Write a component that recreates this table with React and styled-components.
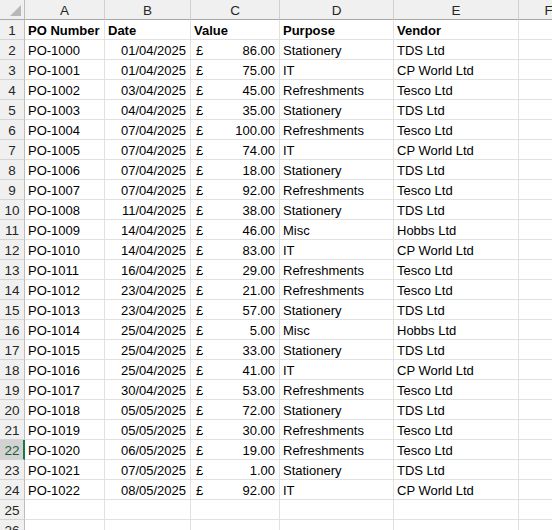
import React from "react";
import styled, { createGlobalStyle } from "styled-components";

const Global = createGlobalStyle`
  html, body { margin: 0; padding: 0; background: #fff; overflow: hidden; }
  body { font-family: "Liberation Sans", Arial, sans-serif; }
`;

const COLS = ["A", "B", "C", "D", "E", "F"];

const Sheet = styled.div`
  display: grid;
  grid-template-columns: 25px 80px 86px 89px 114px 125px 60px;
  grid-auto-rows: 20px;
  width: 552px;
  height: 530px;
  overflow: hidden;
  font-size: 13px;
  color: #000;
`;

const Corner = styled.div`
  position: relative;
  background: #f0f0f0;
  border-right: 1px solid #bcbcbc;
  border-bottom: 1px solid #a8a8a8;
  box-sizing: border-box;
  &::after {
    content: "";
    position: absolute;
    right: 3px;
    bottom: 3px;
    width: 0;
    height: 0;
    border-left: 11px solid transparent;
    border-bottom: 11px solid #b8b8b8;
  }
`;

const ColHead = styled.div`
  background: #f0f0f0;
  border-right: 1px solid #d0d0d0;
  border-bottom: 1px solid #a8a8a8;
  box-sizing: border-box;
  display: flex;
  align-items: center;
  justify-content: center;
  color: #262626;
  font-size: 13.5px;
  padding-top: 1px;
`;

const RowHead = styled.div`
  background: ${(p) => (p.$selected ? "#d2d2d2" : "#f0f0f0")};
  border-right: ${(p) => (p.$selected ? "2px solid #107c41" : "1px solid #bcbcbc")};
  border-bottom: 1px solid #d4d4d4;
  box-sizing: border-box;
  display: flex;
  align-items: center;
  justify-content: center;
  color: ${(p) => (p.$selected ? "#1a5e38" : "#262626")};
  font-size: 13.5px;
  padding-top: 1px;
  padding-left: ${(p) => (p.$selected ? "1px" : "0")};
`;

const Cell = styled.div`
  border-right: 1px solid #e1e1e1;
  border-bottom: 1px solid #e1e1e1;
  box-sizing: border-box;
  display: flex;
  align-items: center;
  justify-content: ${(p) => (p.$right ? "flex-end" : "flex-start")};
  padding: 2px 4px 0 3px;
  white-space: nowrap;
  overflow: visible;
  font-weight: ${(p) => (p.$bold ? 700 : 400)};
`;

const Money = styled(Cell)`
  justify-content: space-between;
  padding: 2px 4px 0 5px;
`;

const rows = [
  ["PO-1000", "01/04/2025", "86.00", "Stationery", "TDS Ltd"],
  ["PO-1001", "01/04/2025", "75.00", "IT", "CP World Ltd"],
  ["PO-1002", "03/04/2025", "45.00", "Refreshments", "Tesco Ltd"],
  ["PO-1003", "04/04/2025", "35.00", "Stationery", "TDS Ltd"],
  ["PO-1004", "07/04/2025", "100.00", "Refreshments", "Tesco Ltd"],
  ["PO-1005", "07/04/2025", "74.00", "IT", "CP World Ltd"],
  ["PO-1006", "07/04/2025", "18.00", "Stationery", "TDS Ltd"],
  ["PO-1007", "07/04/2025", "92.00", "Refreshments", "Tesco Ltd"],
  ["PO-1008", "11/04/2025", "38.00", "Stationery", "TDS Ltd"],
  ["PO-1009", "14/04/2025", "46.00", "Misc", "Hobbs Ltd"],
  ["PO-1010", "14/04/2025", "83.00", "IT", "CP World Ltd"],
  ["PO-1011", "16/04/2025", "29.00", "Refreshments", "Tesco Ltd"],
  ["PO-1012", "23/04/2025", "21.00", "Refreshments", "Tesco Ltd"],
  ["PO-1013", "23/04/2025", "57.00", "Stationery", "TDS Ltd"],
  ["PO-1014", "25/04/2025", "5.00", "Misc", "Hobbs Ltd"],
  ["PO-1015", "25/04/2025", "33.00", "Stationery", "TDS Ltd"],
  ["PO-1016", "25/04/2025", "41.00", "IT", "CP World Ltd"],
  ["PO-1017", "30/04/2025", "53.00", "Refreshments", "Tesco Ltd"],
  ["PO-1018", "05/05/2025", "72.00", "Stationery", "TDS Ltd"],
  ["PO-1019", "05/05/2025", "30.00", "Refreshments", "Tesco Ltd"],
  ["PO-1020", "06/05/2025", "19.00", "Refreshments", "Tesco Ltd"],
  ["PO-1021", "07/05/2025", "1.00", "Stationery", "TDS Ltd"],
  ["PO-1022", "08/05/2025", "92.00", "IT", "CP World Ltd"],
];

export default function App() {
  const out = [];
  out.push(<Corner key="corner" />);
  COLS.forEach((c) => out.push(<ColHead key={"h" + c}>{c}</ColHead>));

  out.push(<RowHead key="r1">1</RowHead>);
  ["PO Number", "Date", "Value", "Purpose", "Vendor"].forEach((t, i) =>
    out.push(
      <Cell key={"r1c" + i} $bold>
        {t}
      </Cell>
    )
  );
  out.push(<Cell key="r1f" />);

  rows.forEach((r, idx) => {
    const n = idx + 2;
    out.push(
      <RowHead key={"rh" + n} $selected={n === 22}>
        {n}
      </RowHead>
    );
    out.push(<Cell key={n + "a"}>{r[0]}</Cell>);
    out.push(
      <Cell key={n + "b"} $right>
        {r[1]}
      </Cell>
    );
    out.push(
      <Money key={n + "c"}>
        <span>£</span>
        <span>{r[2]}</span>
      </Money>
    );
    out.push(<Cell key={n + "d"}>{r[3]}</Cell>);
    out.push(<Cell key={n + "e"}>{r[4]}</Cell>);
    out.push(<Cell key={n + "f"} />);
  });

  [25, 26].forEach((n) => {
    out.push(<RowHead key={"rh" + n}>{n}</RowHead>);
    for (let i = 0; i < 6; i++) out.push(<Cell key={n + "x" + i} />);
  });

  return (
    <>
      <Global />
      <Sheet>{out}</Sheet>
    </>
  );
}
